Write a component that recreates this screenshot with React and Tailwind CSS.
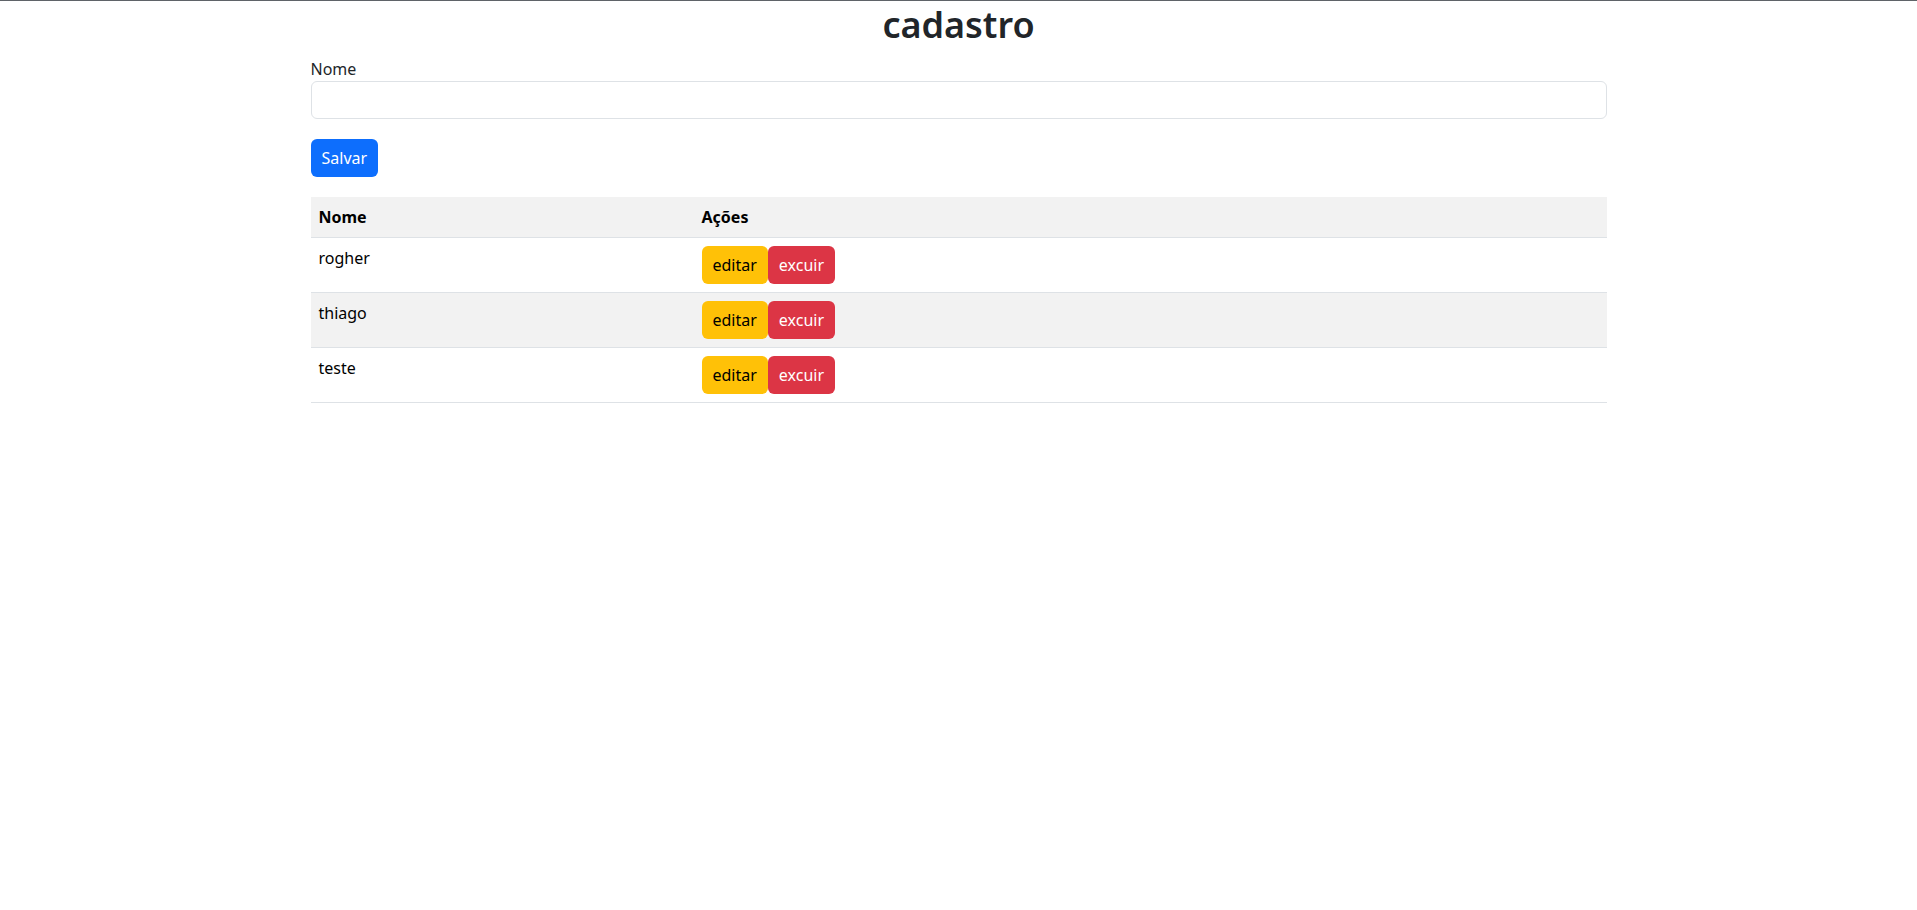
const rows = ['rogher', 'thiago', 'teste']

const App = () => {
  return (
    <div className="min-h-[910px] bg-white border-t border-[#5f6368] font-['Noto_Sans',sans-serif] text-[#212529]">
      <div className="mx-auto max-w-[1320px] px-3">
        <h1 className="text-center text-[36px] font-semibold leading-[48px] mb-2">cadastro</h1>

        <label className="block text-base leading-6">Nome</label>
        <input
          type="text"
          className="block w-full h-[38px] rounded-md border border-[#dee2e6] px-3 text-base outline-none"
        />

        <button
          type="button"
          className="mt-5 h-[38px] px-[11px] rounded-md bg-[#0d6efd] text-white text-base"
        >
          Salvar
        </button>

        <table className="mt-5 w-full border-collapse text-left text-base text-black">
          <thead>
            <tr className="bg-[#f2f2f2] border-b border-[#dee2e6]">
              <th className="w-[383px] px-2 py-2 font-bold leading-6">Nome</th>
              <th className="px-2 py-2 font-bold leading-6">Ações</th>
            </tr>
          </thead>
          <tbody>
            {rows.map((name, i) => (
              <tr
                key={name}
                className={`border-b border-[#dee2e6] ${i % 2 === 1 ? 'bg-[#f2f2f2]' : 'bg-white'}`}
              >
                <td className="px-2 py-2 align-top leading-6">{name}</td>
                <td className="px-2 py-2 align-top">
                  <div className="flex">
                    <button type="button" className="h-[38px] px-[11px] rounded-md bg-[#ffc107] text-black text-base">
                      editar
                    </button>
                    <button type="button" className="h-[38px] px-[11px] rounded-md bg-[#dc3545] text-white text-base">
                      excuir
                    </button>
                  </div>
                </td>
              </tr>
            ))}
          </tbody>
        </table>
      </div>
    </div>
  )
}

export default App
